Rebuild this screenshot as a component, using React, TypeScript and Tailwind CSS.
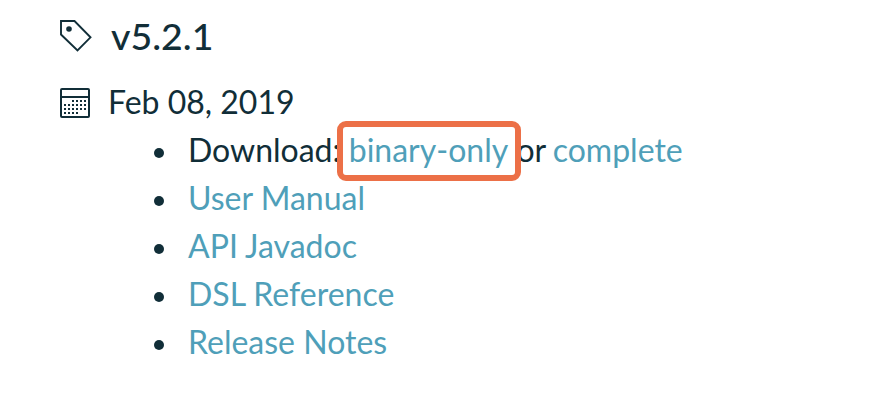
const items = ['User Manual', 'API Javadoc', 'DSL Reference', 'Release Notes'];

// First and last filled column of each calendar row
const rows = [[2, 5], [0, 5], [0, 5], [0, 3]];

function Tag() {
  return (
    <svg className="shrink-0" width="34" height="34" viewBox="0 0 34 34" fill="none" stroke="#112e38" strokeWidth="1.9">
      <path d="M2 2H15.5L31.5 18.3L18.5 31.5L2 15.5Z" />
      <circle cx="10" cy="10" r="2.8" fill="#112e38" stroke="none" />
    </svg>
  );
}

function Calendar() {
  return (
    <svg className="mt-[2px] shrink-0" width="32" height="32" viewBox="0 0 32 32" fill="none" stroke="#112e38" strokeWidth="2">
      <rect x="2" y="2" width="28" height="28" rx="1" />
      <path d="M1 10H31" />
      <g stroke="none" fill="#112e38">
        {rows.map(([from, to], y) =>
          Array.from({ length: to - from + 1 }, (_, i) => (
            <rect key={`${i}-${y}`} x={5 + (from + i) * 4} y={13 + y * 4} width="2" height="2" />
          )),
        )}
      </g>
    </svg>
  );
}

function Item({ children }: { children: React.ReactNode }) {
  return (
    <li className="flex items-center">
      <span className="mr-[24px] mt-[6px] size-[10.5px] shrink-0 rounded-full bg-[#112e38]" />
      <span>{children}</span>
    </li>
  );
}

export default function App() {
  return (
    <main className="h-[414px] w-[894px] overflow-hidden bg-white pl-[59px] pt-[12px] font-['Lato',sans-serif] text-[32px] leading-[48px] text-[#112e38]">
      <h2 className="flex h-[48px] items-center text-[37.5px] font-medium">
        <Tag />
        <span className="ml-[18px]">v5.2.1</span>
      </h2>
      <div className="mt-[18px] flex h-[48px] items-center">
        <Calendar />
        <span className="ml-[17px]">Feb 08, 2019</span>
      </div>
      <ul className="pl-[94.5px]">
        <Item>
          Download: <span className="relative text-[#4f9fb9]">binary-only<span className="absolute -left-[12px] -top-[9px] h-[60px] w-[184px] rounded-[9px] border-[6px] border-[#ec7047]" /></span> or <span className="-ml-px text-[#4f9fb9]">complete</span>
        </Item>
        {items.map((t) => (
          <Item key={t}><a className="text-[#4f9fb9]">{t}</a></Item>
        ))}
      </ul>
    </main>
  );
}
